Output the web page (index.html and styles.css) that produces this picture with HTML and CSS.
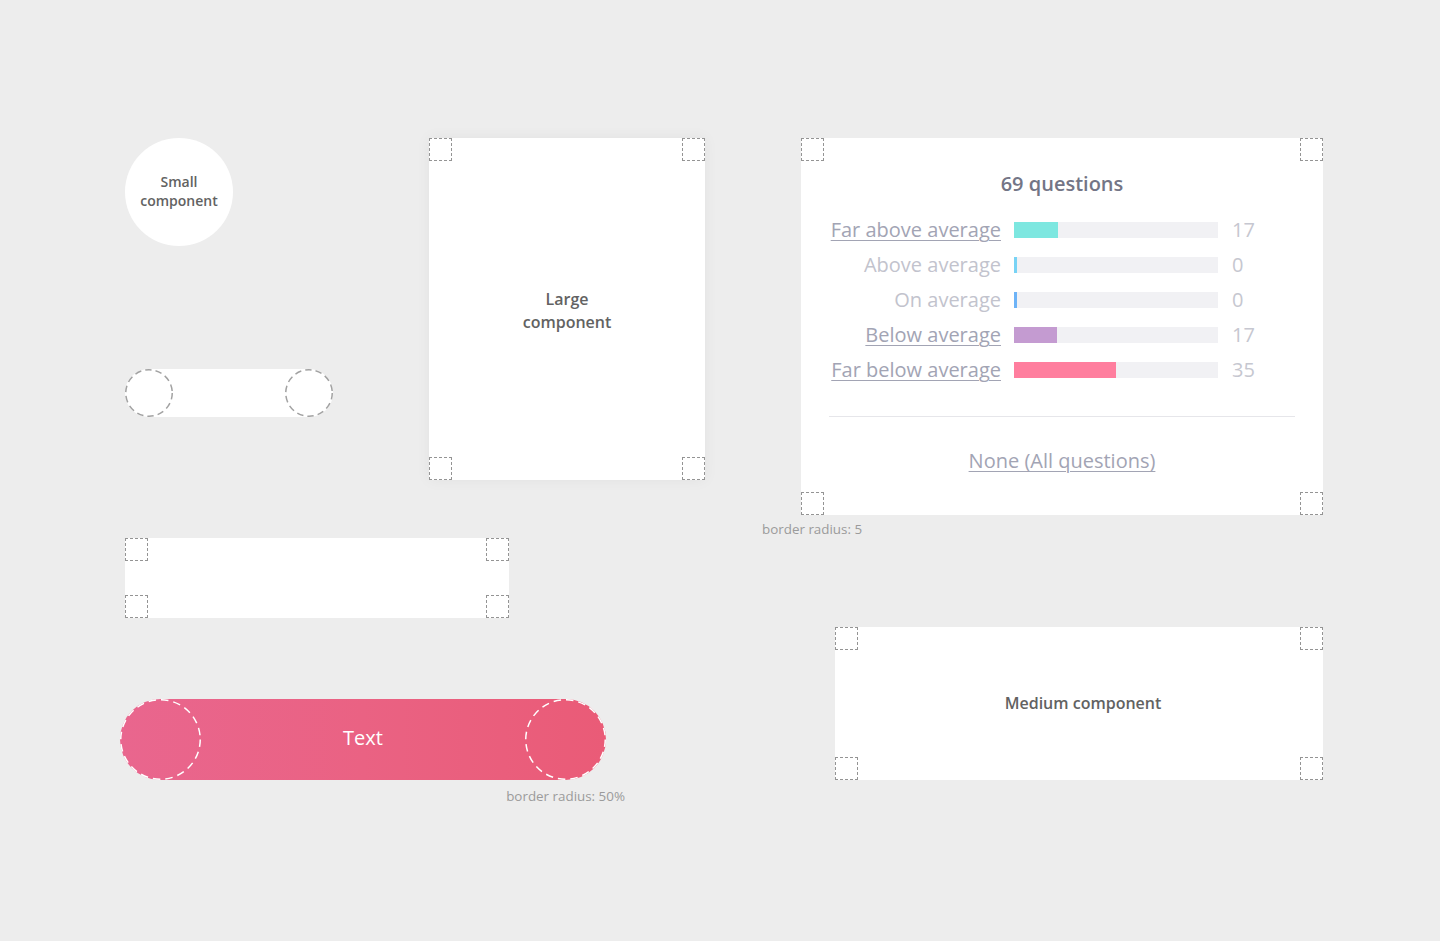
FILE: index.html
```html
<!DOCTYPE html>
<html>
<head>
<meta charset="utf-8">
<link rel="stylesheet" href="styles.css">
</head>
<body>
<main class="canvas">
  <div class="small-circle spec">
    <span>Small<br>component</span>
  </div>

  <div class="white-pill spec">
    <svg class="guide left" width="48" height="48" viewBox="0 0 48 48"><circle cx="24" cy="24" r="23.25" fill="#fff" stroke="#a2a2a2" stroke-width="1.5" stroke-dasharray="6.5 4"/></svg>
    <svg class="guide right" width="48" height="48" viewBox="0 0 48 48"><circle cx="24" cy="24" r="23.25" fill="#fff" stroke="#a2a2a2" stroke-width="1.5" stroke-dasharray="6.5 4"/></svg>
  </div>

  <div class="large-card spec">
    <span class="corner tl"></span><span class="corner tr"></span>
    <span class="corner bl"></span><span class="corner br"></span>
    <span class="label">Large<br>component</span>
  </div>

  <div class="question-card spec">
    <span class="corner tl"></span><span class="corner tr"></span>
    <span class="corner bl"></span><span class="corner br"></span>
    <h2 class="q-title">69 questions</h2>
    <div class="q-rows">
      <div class="q-row">
        <a class="q-label link">Far above average</a>
        <div class="q-track"><div class="q-fill teal" style="width:44px"></div></div>
        <span class="q-count">17</span>
      </div>
      <div class="q-row">
        <span class="q-label">Above average</span>
        <div class="q-track"><div class="q-fill sky" style="width:3px"></div></div>
        <span class="q-count">0</span>
      </div>
      <div class="q-row">
        <span class="q-label">On average</span>
        <div class="q-track"><div class="q-fill blue" style="width:3px"></div></div>
        <span class="q-count">0</span>
      </div>
      <div class="q-row">
        <a class="q-label link">Below average</a>
        <div class="q-track"><div class="q-fill purple" style="width:43px"></div></div>
        <span class="q-count">17</span>
      </div>
      <div class="q-row">
        <a class="q-label link">Far below average</a>
        <div class="q-track"><div class="q-fill pink" style="width:102px"></div></div>
        <span class="q-count">35</span>
      </div>
    </div>
    <hr class="q-divider">
    <a class="q-none">None (All questions)</a>
  </div>
  <p class="note note-5">border radius: 5</p>

  <div class="rect-card spec">
    <span class="corner tl"></span><span class="corner tr"></span>
    <span class="corner bl"></span><span class="corner br"></span>
  </div>

  <div class="text-pill spec">
    <svg class="guide-w left" width="81" height="81" viewBox="0 0 81 81"><circle cx="40.5" cy="40.5" r="39.75" fill="none" stroke="#fff" stroke-width="1.5" stroke-dasharray="7.5 5"/></svg>
    <svg class="guide-w right" width="81" height="81" viewBox="0 0 81 81"><circle cx="40.5" cy="40.5" r="39.75" fill="none" stroke="#fff" stroke-width="1.5" stroke-dasharray="7.5 5"/></svg>
    <span class="pill-text">Text</span>
  </div>
  <p class="note note-50">border radius: 50%</p>

  <div class="medium-card spec">
    <span class="corner tl"></span><span class="corner tr"></span>
    <span class="corner bl"></span><span class="corner br"></span>
    <span class="label">Medium component</span>
  </div>
</main>
</body>
</html>
```

FILE: styles.css
```css
* { box-sizing: border-box; }
html, body {
  margin: 0;
  padding: 0;
  background: #ededed;
  font-family: "Open Sans", "Noto Sans", sans-serif;
}
.canvas {
  position: relative;
  width: 1440px;
  height: 941px;
  overflow: hidden;
}
.spec { position: absolute; }

/* corner guide squares */
.corner {
  position: absolute;
  width: 23px;
  height: 23px;
  border: 1px dashed #949494;
}
.corner.tl { left: 0; top: 0; }
.corner.tr { right: 0; top: 0; }
.corner.bl { left: 0; bottom: 0; }
.corner.br { right: 0; bottom: 0; }

.label {
  font-size: 16px;
  line-height: 23px;
  font-weight: 600;
  color: #626262;
  text-align: center;
}

/* small circle */
.small-circle {
  left: 125px;
  top: 138px;
  width: 108px;
  height: 108px;
  border-radius: 50%;
  background: #fff;
  display: flex;
  align-items: center;
  justify-content: center;
  padding-bottom: 2px;
  text-align: center;
  font-size: 14px;
  line-height: 19px;
  font-weight: 600;
  color: #626262;
}

/* white pill with guide circles */
.white-pill {
  left: 125px;
  top: 369px;
  width: 208px;
  height: 48px;
  background: #fff;
  border-radius: 24px;
}
.guide, .guide-w {
  position: absolute;
  top: 0;
  display: block;
}
.guide.left, .guide-w.left { left: 0; }
.guide.right, .guide-w.right { right: 0; }

/* large card */
.large-card {
  left: 429px;
  top: 138px;
  width: 276px;
  height: 342px;
  background: #fff;
  box-shadow: 0 0 14px rgba(0, 0, 0, 0.05);
  display: flex;
  align-items: center;
  justify-content: center;
  padding-top: 4px;
}

/* question card */
.question-card {
  left: 801px;
  top: 138px;
  width: 522px;
  height: 377px;
  background: #fff;
  border-radius: 2px;
  padding: 32px 28px 0;
  display: flex;
  flex-direction: column;
  align-items: center;
}
.q-title {
  margin: 0;
  font-size: 20px;
  line-height: 28px;
  font-weight: 600;
  color: #737586;
}
.q-rows {
  margin-top: 14px;
  width: 100%;
  display: flex;
  flex-direction: column;
}
.q-row {
  height: 35px;
  display: grid;
  grid-template-columns: 172px 204px auto;
  column-gap: 13px;
  align-items: center;
}
.q-label {
  text-align: right;
  font-size: 20px;
  line-height: 35px;
  color: #c2c3cd;
  white-space: nowrap;
}
.q-label.link {
  color: #a2a4b4;
  text-decoration: underline;
  text-underline-offset: 3px;
  text-decoration-thickness: 1px;
}
.q-track {
  height: 16px;
  background: #f1f1f4;
  display: flex;
}
.q-fill { height: 100%; }
.q-fill.teal { background: #7de7e0; }
.q-fill.sky { background: #78d3f5; }
.q-fill.blue { background: #6db3f7; }
.q-fill.purple { background: #c49bd1; }
.q-fill.pink { background: #ff7e9e; }
.q-count {
  font-size: 20px;
  line-height: 35px;
  color: #c6c7d0;
  margin-left: 1px;
}
.q-divider {
  width: 100%;
  margin: 29px 0 0;
  border: 0;
  border-top: 1px solid #e6e6ea;
}
.q-none {
  margin-top: 30px;
  font-size: 20px;
  line-height: 28px;
  color: #a2a4b4;
  text-decoration: underline;
  text-underline-offset: 3px;
  text-decoration-thickness: 1px;
}

.note {
  position: absolute;
  margin: 0;
  font-size: 13.4px;
  line-height: 18px;
  color: #9b9b9b;
}
.note-5 { left: 762px; top: 520px; }
.note-50 { right: 815px; top: 787px; }

/* rectangle */
.rect-card {
  left: 125px;
  top: 538px;
  width: 384px;
  height: 80px;
  background: #fff;
}

/* text pill */
.text-pill {
  left: 120px;
  top: 699px;
  width: 486px;
  height: 81px;
  border-radius: 40.5px;
  background: linear-gradient(90deg, #e9668e 0%, #ea6283 50%, #ea5b77 100%);
  display: flex;
  align-items: center;
  justify-content: center;
  padding-bottom: 3px;
}
.pill-text {
  font-size: 20px;
  line-height: 28px;
  color: #fff;
}

/* medium card */
.medium-card {
  left: 835px;
  top: 627px;
  width: 488px;
  height: 153px;
  background: #fff;
  display: flex;
  align-items: center;
  justify-content: center;
  padding-left: 8px;
}
```
